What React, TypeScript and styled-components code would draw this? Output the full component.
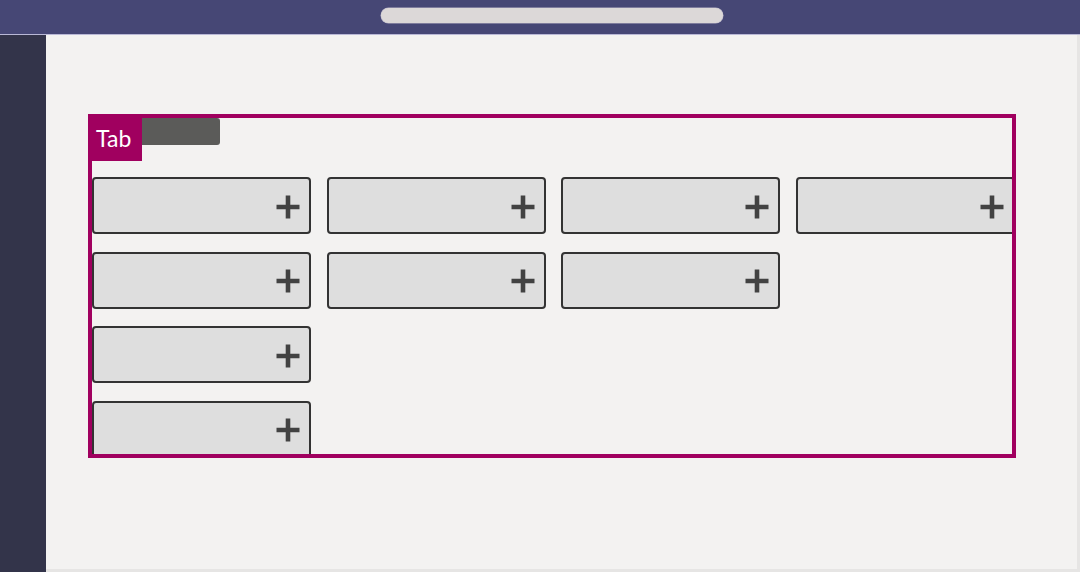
import React from "react";
import styled, { createGlobalStyle } from "styled-components";

const GlobalStyle = createGlobalStyle`
  html, body { margin: 0; padding: 0; }
  body { background: #f3f2f1; font-family: "Segoe UI", "Open Sans", sans-serif; }
  * { box-sizing: border-box; }
`;

const Shell = styled.div`
  width: 1080px;
  height: 572px;
  display: flex;
  flex-direction: column;
  overflow: hidden;
`;

const TopBar = styled.header`
  height: 35px;
  flex: none;
  background: #464775;
  border-bottom: 1px solid #b9b8d6;
  display: flex;
  align-items: flex-start;
  padding: 8px 0 0 381px;
`;

const SearchPill = styled.div`
  width: 342px;
  height: 15px;
  border-radius: 8px;
  background: #dcd8d8;
  box-shadow: 0 0 0 0.5px #b7b3c6;
`;

const Body = styled.div`
  flex: 1;
  display: flex;
  min-height: 0;
`;

const Rail = styled.nav`
  width: 46px;
  flex: none;
  background: #33344a;
`;

const Main = styled.main`
  flex: 1;
  background: #f3f2f1;
  border-right: 3px solid #e6e5e4;
  border-bottom: 3px solid #e6e5e4;
  padding: 79px 0 0 42px;
`;

const Frame = styled.section`
  position: relative;
  width: 928px;
  height: 344px;
  border: 4px solid #a0005f;
  overflow: hidden;
`;

const TabLabel = styled.div`
  position: absolute;
  top: -4px;
  left: -4px;
  width: 54px;
  height: 47px;
  background: #a0005f;
  color: #ffffff;
  font-family: Lato, "Open Sans", sans-serif;
  font-weight: 400;
  font-size: 23px;
  line-height: 1;
  padding: 13px 0 0 8px;
  z-index: 2;
`;

const Handle = styled.div`
  position: absolute;
  top: 0;
  left: 50px;
  width: 78px;
  height: 27px;
  background: #5b5b59;
  border-radius: 0 3px 3px 0;
  z-index: 1;
`;

const Rows = styled.div`
  display: flex;
  flex-direction: column;
  gap: 17.6px;
  padding-top: 59px;
`;

const Row = styled.div`
  display: flex;
  gap: 15.6px;
`;

const Card = styled.button`
  flex: none;
  width: 219px;
  height: 57px;
  margin: 0;
  border: 2px solid #333333;
  border-radius: 4px;
  background: #dedede;
  display: flex;
  align-items: center;
  justify-content: flex-end;
  padding: 2px 9px 0 0;
  cursor: pointer;
`;

const Plus = () => (
  <svg width="24" height="24" viewBox="0 0 24 24" aria-hidden="true">
    <path d="M12 0.5v23M0.5 12h23" stroke="#424242" strokeWidth="4.6" fill="none" />
  </svg>
);

const layout = [4, 3, 1, 1];

export default function App() {
  return (
    <>
      <GlobalStyle />
      <Shell>
        <TopBar>
          <SearchPill />
        </TopBar>
        <Body>
          <Rail />
          <Main>
            <Frame>
              <TabLabel>Tab</TabLabel>
              <Handle />
              <Rows>
                {layout.map((count, r) => (
                  <Row key={r}>
                    {Array.from({ length: count }).map((_, c) => (
                      <Card key={c} aria-label="Add">
                        <Plus />
                      </Card>
                    ))}
                  </Row>
                ))}
              </Rows>
            </Frame>
          </Main>
        </Body>
      </Shell>
    </>
  );
}
